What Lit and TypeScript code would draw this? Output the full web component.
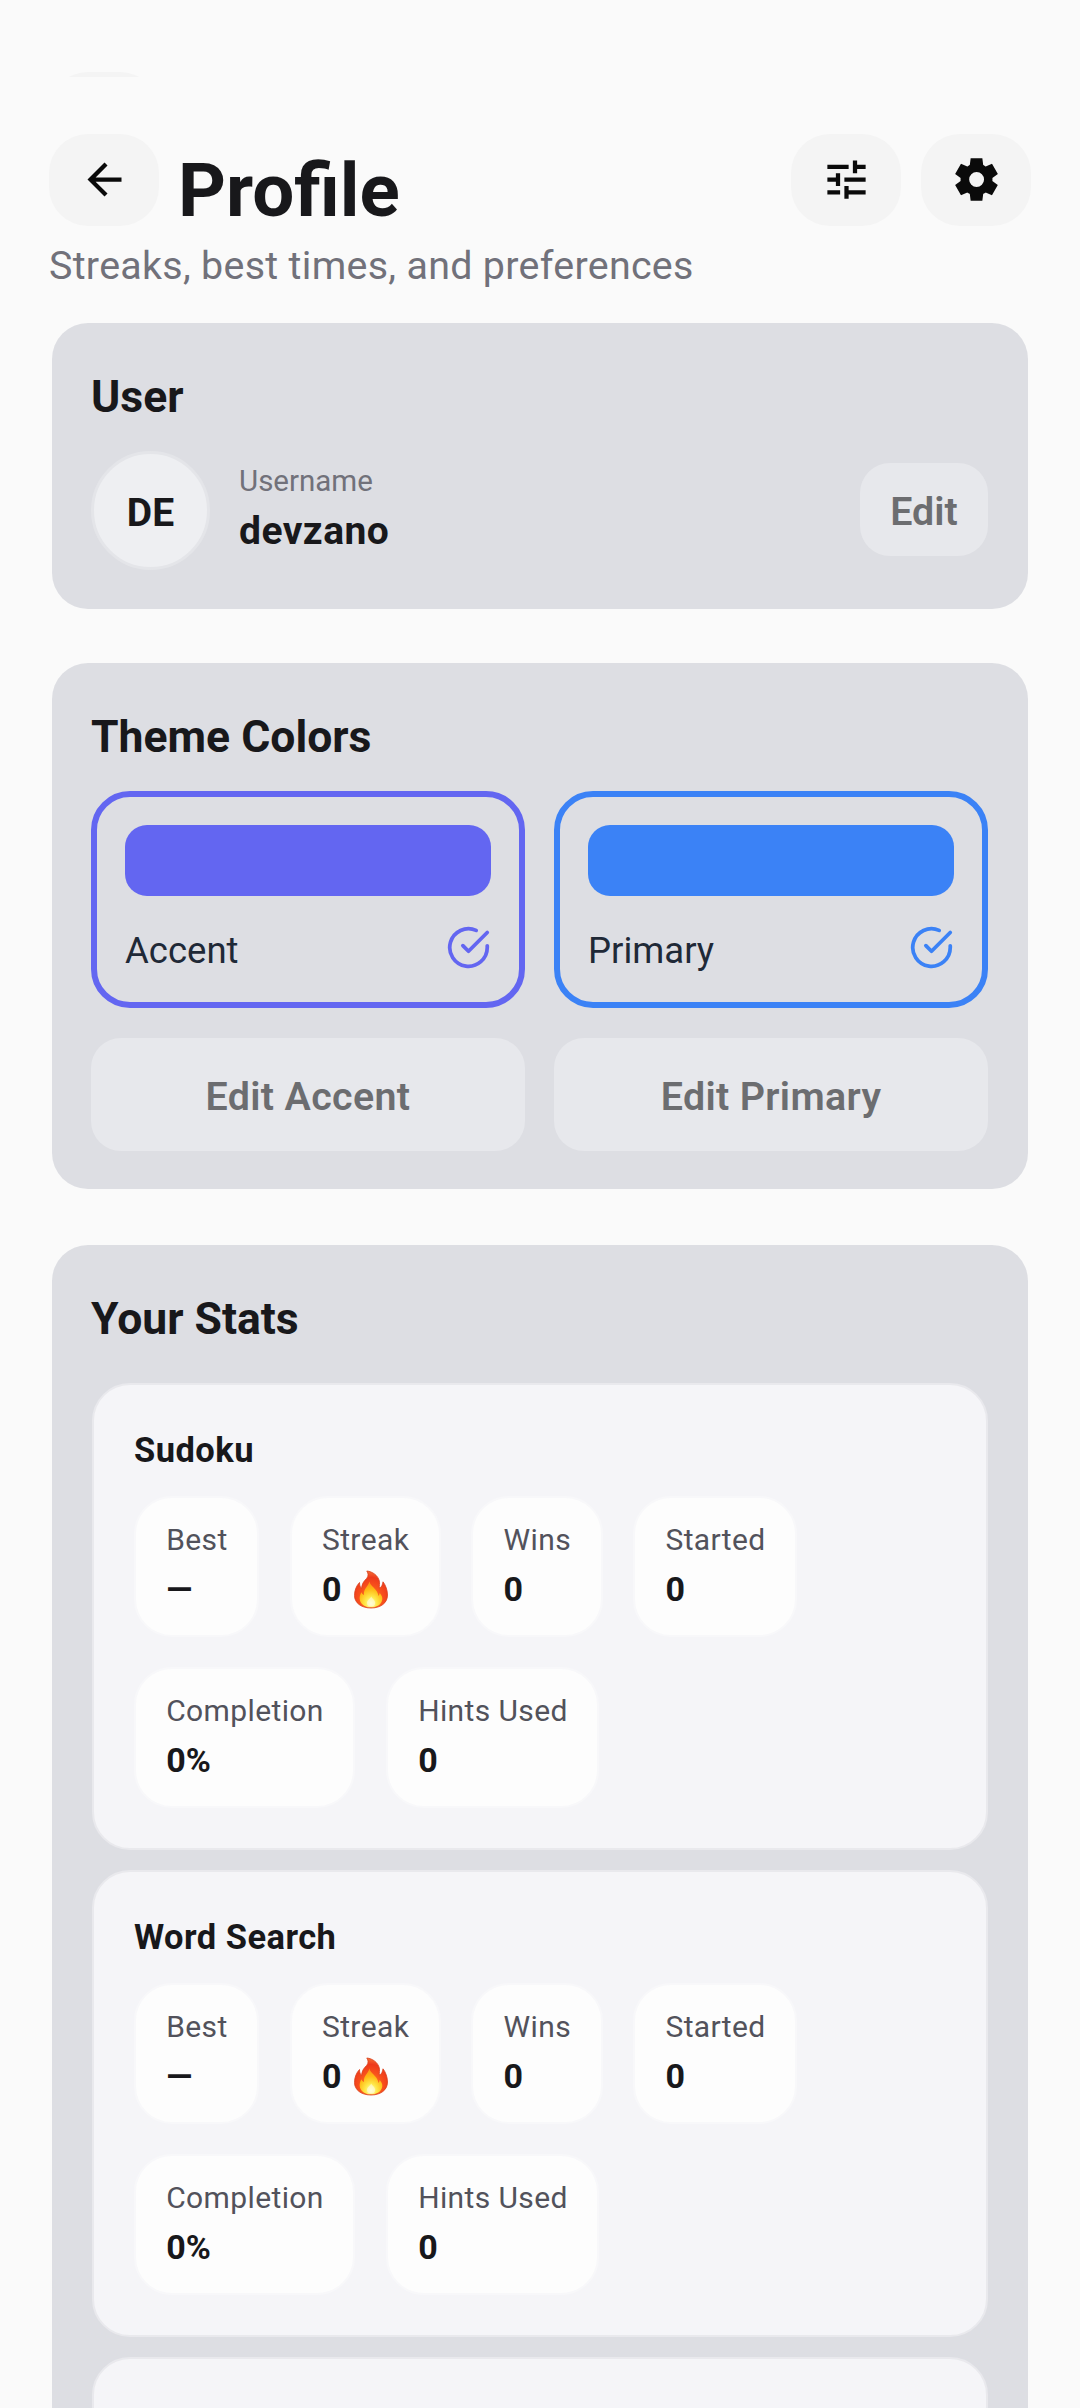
import { LitElement, html, css, svg } from "lit";
import { customElement, property } from "lit/decorators.js";

const icons = {
  back: svg`<path d="m313-440 224 224-57 56-320-320 320-320 57 56-224 224h487v80H313Z"/>`,
  tune: svg`<path d="M440-120v-240h80v80h320v80H520v80h-80Zm-320-80v-80h240v80H120Zm160-160v-80H120v-80h160v-80h80v240h-80Zm160-80v-80h400v80H440Zm160-160v-240h80v80h160v80H680v80h-80Zm-480-80v-80h400v80H120Z"/>`,
  settings: svg`<path d="m370-80-16-128q-13-5-24.500-12T307-235l-119 50L78-375l103-78q-1-7-1-13.500v-27q0-6.500 1-13.500L78-585l110-190 119 50q11-8 23-15t24-12l16-128h220l16 128q13 5 24.500 12t22.500 15l119-50 110 190-103 78q1 7 1 13.500v27q0 6.500-2 13.500l103 78-110 190-118-50q-11 8-23 15t-24 12L590-80H370Zm112-260q58 0 99-41t41-99q0-58-41-99t-99-41q-59 0-99.500 41T342-480q0 58 40.500 99t99.500 41Z"/>`,
};

@customElement("icon-button")
class IconButton extends LitElement {
  @property() name: keyof typeof icons = "back";
  static styles = css`
    .btn {
      display: flex;
      align-items: center;
      justify-content: center;
      box-sizing: border-box;
      width: 110px;
      height: 92px;
      padding: 0 0 1px;
      border: 0;
      border-radius: 39px;
      background: #f4f4f4;
    }
    .icon {
      width: 51px;
      height: 51px;
      fill: #0a0a0a;
    }
  `;
  render() {
    return html`<button class="btn" aria-label=${this.name}>
      <svg class="icon" viewBox="0 -960 960 960">${icons[this.name]}</svg>
    </button>`;
  }
}

@customElement("color-tile")
class ColorTile extends LitElement {
  @property() label = "";
  @property() color = "";
  static styles = css`
    .tile {
      box-sizing: border-box;
      height: 217px;
      padding: 28px;
      border: 6px solid var(--c);
      border-radius: 39px;
    }
    .swatch {
      height: 71px;
      border-radius: 22px;
      background: var(--c);
    }
    .row {
      display: flex;
      justify-content: space-between;
      align-items: center;
      margin-top: 29px;
      height: 45px;
    }
    .label {
      font-size: 36.500px;
      line-height: 46px;
      padding-top: 7px;
      color: #1f2937;
    }
    .check {
      width: 45px;
      height: 45px;
      fill: none;
      stroke: var(--c);
      stroke-width: 2;
      stroke-linecap: round;
      stroke-linejoin: round;
    }
  `;
  render() {
    return html`<div class="tile" style="--c:${this.color}">
      <div class="swatch"></div>
      <div class="row">
        <span class="label">${this.label}</span>
        <svg class="check" viewBox="0 0 24 24">
          <path d="M22 11.080V12a10 10 0 1 1-5.930-9.140" />
          <path d="M22 4 12 14.010l-3-3" />
        </svg>
      </div>
    </div>`;
  }
}

@customElement("flame-icon")
class FlameIcon extends LitElement {
  static styles = css`
    :host {
      display: inline-flex;
    }
    .flame {
      width: 34px;
      height: 39px;
    }
  `;
  render() {
    return html`<svg class="flame" viewBox="0 0 34 39">
      <defs>
        <radialGradient id="outer" cx="0.5" cy="0.75" r="0.8">
          <stop offset="0" stop-color="#ff9a1f" />
          <stop offset="0.450" stop-color="#f8501c" />
          <stop offset="0.720" stop-color="#ee3a1c" />
          <stop offset="1" stop-color="#f6813f" />
        </radialGradient>
        <radialGradient id="inner" cx="0.5" cy="0.85" r="0.85">
          <stop offset="0" stop-color="#fffbd0" />
          <stop offset="0.300" stop-color="#ffe94a" />
          <stop offset="0.650" stop-color="#ffb914" />
          <stop offset="1" stop-color="#fb8a1a" />
        </radialGradient>
      </defs>
      <path
        fill="url(#outer)"
        stroke="#d8401c"
        stroke-width="0.800"
        d="M12.800 1C18.500 1.500 24 5.500 25.300 11c.6 2.600-.3 4.800.2 7.200 2.100-1 3-3.400 3.500-6.400 2.500 3.200 4.500 8.200 4.500 13.200 0 8-6.800 13-16.500 13S.5 33 .5 25.500c0-5.200 1.800-9.500 5-13 .1 2.500.5 4.600 2 6C8 13.500 10 11 12.600 8.500c2-2.200 1.900-5 .2-7.500z"
      />
      <path
        fill="url(#inner)"
        d="M15.500 11.500c.5 5 8 7 9 14.500.5-.8 1-1.800 1.200-3 2 2.500 2.800 4.200 2.600 6.200-.5 5-5 8.100-11.300 8.100S6 34 5.700 28.700c-.1-2.500.5-4.300 1.800-6.500.5 1.500 1.200 2.300 2.500 2.800-.8-6 4-8.500 5.500-13.500z"
      />
      <path fill="#fffde0" fill-opacity="0.600" d="M17.200 26.500c1 2.300 4 3.700 4 6.500 0 2.300-1.700 3.600-4.100 3.600s-4.100-1.300-4.100-3.600c0-2.900 3.400-4.100 4.200-6.500z" />
    </svg>`;
  }
}

interface Stat {
  label: string;
  value: string;
  flame?: boolean;
}

@customElement("game-stats")
class GameStats extends LitElement {
  @property() name = "";
  @property({ attribute: false }) stats: Stat[] = [];
  static styles = css`
    .card {
      box-sizing: border-box;
      height: 467px;
      padding: 41px 40px 42px;
      border: 2px solid #e9e9ed;
      border-radius: 38px;
      background: #f5f5f8;
    }
    .name {
      margin: 0;
      font-size: 34.500px;
      font-weight: 700;
      line-height: 46px;
      letter-spacing: 0.450px;
      padding-top: 1px;
      color: #18181b;
    }
    .chips {
      display: flex;
      flex-wrap: wrap;
      gap: 30px 30.500px;
      margin-top: 22.500px;
    }
    .chip {
      box-sizing: border-box;
      height: 141px;
      padding: 23.500px 29.700px 0 30.200px;
      border: 2px solid #f8f8fa;
      border-radius: 38px;
      background: #fdfdfd;
    }
    .label {
      font-size: 30px;
      line-height: 38px;
      letter-spacing: 0.380px;
      color: #52525b;
    }
    .value {
      display: flex;
      align-items: center;
      gap: 12px;
      margin-top: 8px;
      font-size: 34px;
      font-weight: 700;
      line-height: 44px;
      height: 44px;
      color: #18181b;
    }
  `;
  render() {
    return html`<section class="card">
      <h3 class="name">${this.name}</h3>
      <div class="chips">
        ${this.stats.map(
          (s) => html`<div class="chip">
            <div class="label">${s.label}</div>
            <div class="value">
              <span>${s.value}</span>${s.flame ? html`<flame-icon></flame-icon>` : ""}
            </div>
          </div>`,
        )}
      </div>
    </section>`;
  }
}

const emptyStats: Stat[] = [
  { label: "Best", value: "—" },
  { label: "Streak", value: "0", flame: true },
  { label: "Wins", value: "0" },
  { label: "Started", value: "0" },
  { label: "Completion", value: "0%" },
  { label: "Hints Used", value: "0" },
];

@customElement("app-root")
class AppRoot extends LitElement {
  static styles = css`
    :host {
      display: block;
      height: 2408px;
      overflow: hidden;
      background: #fafafa;
      font-family: Roboto, "Liberation Sans", sans-serif;
      color: #18181b;
    }
    .peek {
      height: 5px;
      margin: 0 49px;
      padding-top: 72px;
    }
    .peek-clip {
      height: 5px;
      overflow: hidden;
    }
    .peek-shape {
      width: 110px;
      height: 92px;
      border-radius: 39px;
      background: #f4f4f4;
    }
    .header {
      display: flex;
      gap: 20px;
      margin: 57px 49px 0;
      height: 92px;
    }
    .title {
      flex: 1;
      margin: 0 0 0 -1px;
      font-size: 74.500px;
      font-weight: 700;
      line-height: 92px;
      padding-top: 11px;
      font-variant-ligatures: common-ligatures;
    }
    .subtitle {
      margin: 15px 49px 0;
      height: 49px;
      font-size: 39.400px;
      line-height: 50px;
      letter-spacing: 0.300px;
      color: #71717a;
    }
    .card {
      box-sizing: border-box;
      margin: 0 52px;
      padding: 0 40px 0 39px;
      border-radius: 36px;
      background: #dddee3;
    }
    .card h2 {
      margin: 0;
      font-size: 44.500px;
      font-weight: 700;
      line-height: 56px;
    }
    .user {
      height: 286px;
      margin-top: 33px;
      padding-top: 46px;
    }
    .user-row {
      display: flex;
      align-items: center;
      margin-top: 26px;
    }
    .avatar {
      box-sizing: border-box;
      width: 119px;
      height: 119px;
      padding-top: 3px;
      border: 3px solid #e4e5e9;
      border-radius: 50%;
      background: #eeeff2;
      font-size: 39px;
      font-weight: 700;
      line-height: 112px;
      text-align: center;
    }
    .who {
      flex: 1;
      padding: 0 0 4px 29px;
    }
    .who-label {
      font-size: 29.500px;
      line-height: 38px;
      color: #71717a;
    }
    .who-name {
      margin-top: 6px;
      font-size: 39px;
      font-weight: 700;
      line-height: 50px;
      letter-spacing: 0.450px;
    }
    .soft {
      border: 0;
      padding: 0;
      border-radius: 30px;
      background: #e7e8ec;
      color: #6c6d70;
      font-family: inherit;
      font-size: 39.400px;
      font-weight: 600;
    }
    .edit {
      width: 128px;
      height: 93px;
      margin-bottom: 2px;
      line-height: 93px;
      padding-top: 2px;
    }
    .theme {
      height: 526px;
      margin-top: 54px;
      padding-top: 46px;
    }
    .grid {
      display: grid;
      grid-template-columns: 1fr 1fr;
      gap: 30px 29px;
      margin-top: 26px;
    }
    .wide {
      height: 113px;
      padding-top: 4px;
      letter-spacing: 0.350px;
    }
    .stats {
      height: 1300px;
      margin-top: 56px;
      padding-top: 46px;
    }
    .games {
      display: flex;
      flex-direction: column;
      gap: 20px;
      margin-top: 36px;
      padding: 0 0 0 1px;
    }
  `;
  render() {
    return html`
      <div class="peek"><div class="peek-clip"><div class="peek-shape"></div></div></div>
      <header class="header">
        <icon-button name="back"></icon-button>
        <h1 class="title">Profile</h1>
        <icon-button name="tune"></icon-button>
        <icon-button name="settings"></icon-button>
      </header>
      <p class="subtitle">Streaks, best times, and preferences</p>

      <section class="card user">
        <h2>User</h2>
        <div class="user-row">
          <div class="avatar">DE</div>
          <div class="who">
            <div class="who-label">Username</div>
            <div class="who-name">devzano</div>
          </div>
          <button class="soft edit">Edit</button>
        </div>
      </section>

      <section class="card theme">
        <h2>Theme Colors</h2>
        <div class="grid">
          <color-tile label="Accent" color="#6366f1"></color-tile>
          <color-tile label="Primary" color="#3b82f6"></color-tile>
          <button class="soft wide">Edit Accent</button>
          <button class="soft wide">Edit Primary</button>
        </div>
      </section>

      <section class="card stats">
        <h2>Your Stats</h2>
        <div class="games">
          ${["Sudoku", "Word Search", ""].map(
            (name) => html`<game-stats .name=${name} .stats=${name ? emptyStats : []}></game-stats>`,
          )}
        </div>
      </section>
    `;
  }
}
